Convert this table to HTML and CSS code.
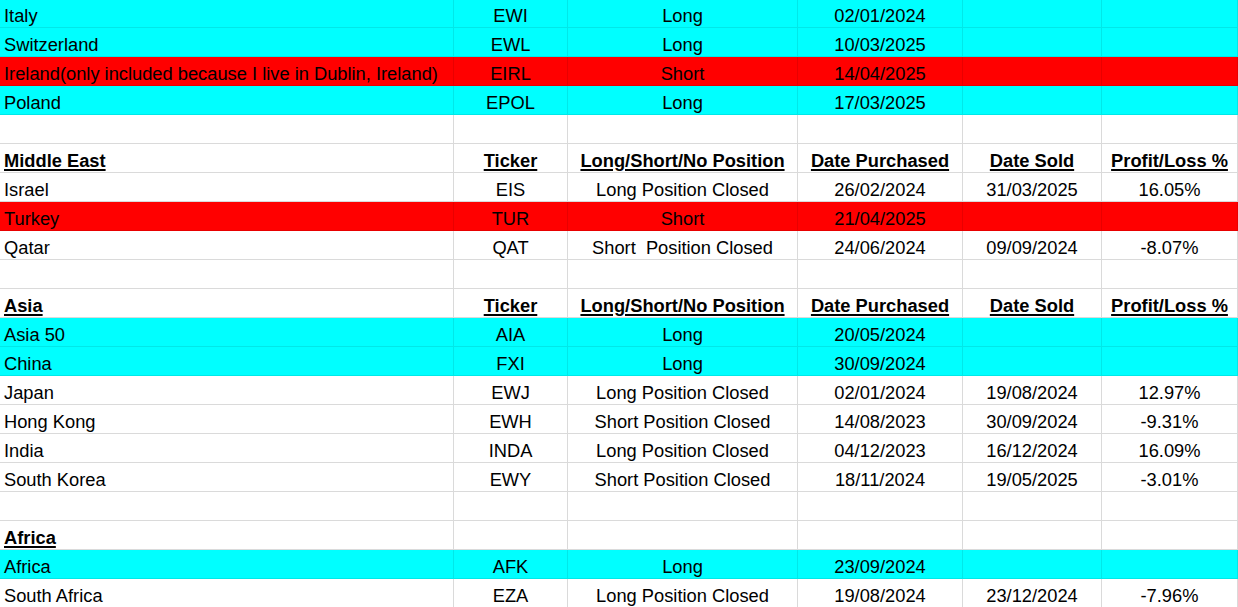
FILE: index.html
```html
<!DOCTYPE html>
<html>
<head>
<meta charset="utf-8">
<link rel="stylesheet" href="styles.css">
</head>
<body>
<div class="sheet">
  <div class="row cyan"><div class="c l">Italy</div><div class="c">EWI</div><div class="c">Long</div><div class="c">02/01/2024</div><div class="c"></div><div class="c"></div></div>
  <div class="row cyan"><div class="c l">Switzerland</div><div class="c">EWL</div><div class="c">Long</div><div class="c">10/03/2025</div><div class="c"></div><div class="c"></div></div>
  <div class="row red"><div class="c l">Ireland(only included because I live in Dublin, Ireland)</div><div class="c">EIRL</div><div class="c">Short</div><div class="c">14/04/2025</div><div class="c"></div><div class="c"></div></div>
  <div class="row cyan"><div class="c l">Poland</div><div class="c">EPOL</div><div class="c">Long</div><div class="c">17/03/2025</div><div class="c"></div><div class="c"></div></div>
  <div class="row"><div class="c l"></div><div class="c"></div><div class="c"></div><div class="c"></div><div class="c"></div><div class="c"></div></div>
  <div class="row head"><div class="c l">Middle East</div><div class="c">Ticker</div><div class="c">Long/Short/No Position</div><div class="c">Date Purchased</div><div class="c">Date Sold</div><div class="c">Profit/Loss %</div></div>
  <div class="row"><div class="c l">Israel</div><div class="c">EIS</div><div class="c">Long Position Closed</div><div class="c">26/02/2024</div><div class="c">31/03/2025</div><div class="c">16.05%</div></div>
  <div class="row red"><div class="c l">Turkey</div><div class="c">TUR</div><div class="c">Short</div><div class="c">21/04/2025</div><div class="c"></div><div class="c"></div></div>
  <div class="row"><div class="c l">Qatar</div><div class="c">QAT</div><div class="c pre">Short  Position Closed</div><div class="c">24/06/2024</div><div class="c">09/09/2024</div><div class="c">-8.07%</div></div>
  <div class="row"><div class="c l"></div><div class="c"></div><div class="c"></div><div class="c"></div><div class="c"></div><div class="c"></div></div>
  <div class="row head"><div class="c l">Asia</div><div class="c">Ticker</div><div class="c">Long/Short/No Position</div><div class="c">Date Purchased</div><div class="c">Date Sold</div><div class="c">Profit/Loss %</div></div>
  <div class="row cyan"><div class="c l">Asia 50</div><div class="c">AIA</div><div class="c">Long</div><div class="c">20/05/2024</div><div class="c"></div><div class="c"></div></div>
  <div class="row cyan"><div class="c l">China</div><div class="c">FXI</div><div class="c">Long</div><div class="c">30/09/2024</div><div class="c"></div><div class="c"></div></div>
  <div class="row"><div class="c l">Japan</div><div class="c">EWJ</div><div class="c">Long Position Closed</div><div class="c">02/01/2024</div><div class="c">19/08/2024</div><div class="c">12.97%</div></div>
  <div class="row"><div class="c l">Hong Kong</div><div class="c">EWH</div><div class="c">Short Position Closed</div><div class="c">14/08/2023</div><div class="c">30/09/2024</div><div class="c">-9.31%</div></div>
  <div class="row"><div class="c l">India</div><div class="c">INDA</div><div class="c">Long Position Closed</div><div class="c">04/12/2023</div><div class="c">16/12/2024</div><div class="c">16.09%</div></div>
  <div class="row"><div class="c l">South Korea</div><div class="c">EWY</div><div class="c">Short Position Closed</div><div class="c">18/11/2024</div><div class="c">19/05/2025</div><div class="c">-3.01%</div></div>
  <div class="row"><div class="c l"></div><div class="c"></div><div class="c"></div><div class="c"></div><div class="c"></div><div class="c"></div></div>
  <div class="row head"><div class="c l">Africa</div><div class="c"></div><div class="c"></div><div class="c"></div><div class="c"></div><div class="c"></div></div>
  <div class="row cyan"><div class="c l">Africa</div><div class="c">AFK</div><div class="c">Long</div><div class="c">23/09/2024</div><div class="c"></div><div class="c"></div></div>
  <div class="row"><div class="c l">South Africa</div><div class="c">EZA</div><div class="c">Long Position Closed</div><div class="c">19/08/2024</div><div class="c">23/12/2024</div><div class="c">-7.96%</div></div>
</div>
</body>
</html>
```

FILE: styles.css
```css
html, body {
  margin: 0;
  padding: 0;
  background: #ffffff;
}
body {
  overflow: hidden;
  font-family: "Liberation Sans", Arial, sans-serif;
  font-size: 18.3px;
  color: #000000;
}
.sheet {
  margin-top: -1px;
  display: flex;
  flex-direction: column;
}
.row {
  display: grid;
  grid-template-columns: 454px 114px 230px 165px 139px 1fr;
  height: 29px;
}
.c {
  box-sizing: border-box;
  height: 29px;
  border-right: 1px solid #dadada;
  border-bottom: 1px solid #dadada;
  text-align: center;
  white-space: nowrap;
  overflow: hidden;
  display: flex;
  align-items: flex-end;
  justify-content: center;
  padding-bottom: 1px;
  line-height: 21px;
}
.c.l {
  justify-content: flex-start;
  padding-left: 4px;
}
.pre {
  white-space: pre;
}
.cyan {
  background: #00ffff;
}
.red {
  background: #ff0000;
}
.cyan .c, .red .c {
  border-color: rgba(0, 0, 0, 0.09);
}
.head .c {
  font-weight: bold;
  text-decoration: underline;
  text-decoration-thickness: 2px;
  text-underline-offset: 2px;
}
```
